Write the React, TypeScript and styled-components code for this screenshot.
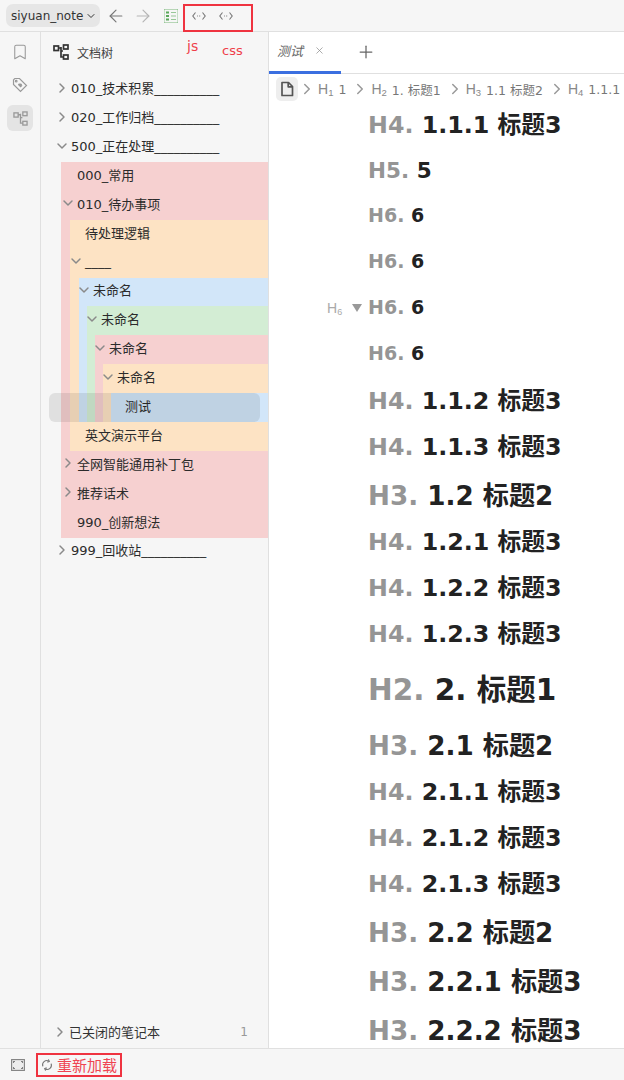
import React from 'react';
import styled, { createGlobalStyle } from 'styled-components';
import { ArrowLeft, ArrowRight, Bookmark, ChevronDown, ChevronRight, Plus, X } from 'lucide-react';

const UI_FONT = '"DejaVu Sans", "Noto Sans CJK SC", sans-serif';

const GlobalStyle = createGlobalStyle`
  html, body { margin: 0; padding: 0; background: #fff; }
  body { font-family: ${UI_FONT}; color: #222; }
  * { box-sizing: border-box; }
`;

const Page = styled.div`
  width: 624px;
  height: 1080px;
  display: flex;
  flex-direction: column;
  overflow: hidden;
  position: relative;
`;

const TopBar = styled.div`
  height: 32px;
  flex: none;
  display: flex;
  align-items: center;
  padding-left: 6px;
  background: #f6f6f6;
  border-bottom: 1px solid #e0e0e0;
`;

const NotebookSelect = styled.div`
  width: 94px;
  height: 23px;
  display: flex;
  align-items: center;
  justify-content: space-between;
  padding: 0 3px 0 5px;
  background: #e6e6e6;
  border-radius: 7px;
  font-size: 12px;
  color: #333;
`;

const NavButton = styled.div<{ $dim?: boolean }>`
  width: 24px;
  height: 24px;
  margin-left: 3.5px;
  display: flex;
  align-items: center;
  justify-content: center;
  color: ${({ $dim }) => ($dim ? '#b5b5b5' : '#777')};
`;

const RedBox = styled.div`
  width: 70px;
  height: 28px;
  margin: 4px 0 0 0.5px;
  display: flex;
  align-items: center;
  padding: 0 0 4px 7px;
  gap: 13px;
  border: 2px solid #ef3340;
  align-self: flex-start;
`;

const Note = styled.span<{ $left: number; $top: number; $size: number }>`
  position: absolute;
  left: ${({ $left }) => $left}px;
  top: ${({ $top }) => $top}px;
  color: #ef3f4a;
  font-size: ${({ $size }) => $size}px;
  line-height: 16px;
`;

const Middle = styled.div`
  flex: 1;
  min-height: 0;
  display: flex;
`;

const Rail = styled.div`
  width: 41px;
  flex: none;
  padding-top: 7px;
  display: flex;
  flex-direction: column;
  align-items: center;
  gap: 7px;
  background: #f6f6f6;
  border-right: 1px solid #e0e0e0;
`;

const RailButton = styled.div<{ $active?: boolean }>`
  width: 26px;
  height: 26px;
  display: flex;
  align-items: center;
  justify-content: center;
  border-radius: 6px;
  color: #999;
  background: ${({ $active }) => ($active ? '#e4e4e4' : 'transparent')};
`;

const TreePanel = styled.div`
  width: 228px;
  flex: none;
  display: flex;
  flex-direction: column;
  background: #f6f6f6;
  border-right: 1px solid #e0e0e0;
`;

const TreeHeader = styled.div`
  height: 43.3px;
  flex: none;
  display: flex;
  align-items: center;
  gap: 8px;
  padding: 0 0 3px 12px;
  font-size: 12px;
  color: #444;
`;

const HeaderIcon = styled.span`
  display: flex;
  color: #333;
`;

const TreeBody = styled.div`
  flex: 1;
  min-height: 0;
`;

const Group = styled.div<{ $tint: string; $inset: number }>`
  margin-left: ${({ $inset }) => $inset}px;
  background: ${({ $tint }) => $tint};
`;

const Row = styled.div<{ $pad: number; $focus?: boolean }>`
  position: relative;
  height: 28.9px;
  display: flex;
  align-items: center;
  padding-left: ${({ $pad }) => $pad}px;
  padding-bottom: 4px;
  font-size: 13px;
  color: #2b2b2b;
  white-space: nowrap;

  ${({ $focus }) =>
    $focus &&
    `
    &::after {
      content: '';
      position: absolute;
      left: -62px;
      right: 8px;
      top: 0;
      bottom: 0;
      border-radius: 6px;
      background: rgba(0, 0, 0, 0.085);
    }
  `}
`;

const Toggle = styled.span`
  width: 12px;
  flex: none;
  display: flex;
  align-items: center;
  color: #8a8a8a;

  svg {
    flex: none;
    margin-left: -5px;
  }
`;

const ClosedNotebooks = styled.div`
  height: 29px;
  margin-bottom: 2px;
  flex: none;
  display: flex;
  align-items: center;
  padding: 0 20px 0 16px;
  font-size: 13px;
  color: #333;
`;

const ClosedLabel = styled.span`
  flex: 1;
`;

const ClosedCount = styled.span`
  font-size: 12px;
  color: #999;
`;

const Editor = styled.div`
  flex: 1;
  min-width: 0;
  display: flex;
  flex-direction: column;
  background: #fff;
`;

const TabBar = styled.div`
  height: 42px;
  flex: none;
  display: flex;
  border-bottom: 1px solid #e0e0e0;
`;

const Tab = styled.div`
  width: 72px;
  height: 42px;
  display: flex;
  align-items: center;
  gap: 11px;
  padding: 0 0 3px 8px;
  font-size: 13px;
  font-style: italic;
  color: #666;
  border-bottom: 3px solid #3b6fe0;
`;

const TabClose = styled.span`
  display: flex;
  color: #888;
`;

const AddTab = styled.div`
  width: 50px;
  display: flex;
  align-items: center;
  justify-content: center;
  color: #666;
  padding-bottom: 2px;
`;

const Breadcrumb = styled.div`
  height: 28px;
  flex: none;
  display: flex;
  align-items: center;
  padding: 2px 0 0 7px;
  font-size: 12.5px;
  color: #777;
  white-space: nowrap;
  overflow: hidden;
`;

const DocButton = styled.div`
  width: 22px;
  height: 24px;
  flex: none;
  display: flex;
  align-items: center;
  justify-content: center;
  border-radius: 5px;
  background: #eeeeee;
  color: #555;
`;

const Crumb = styled.span`
  display: flex;
  align-items: center;
  flex: none;
  margin-left: 5px;
  gap: 5px;
`;

const CrumbLevel = styled.span`
  font-family: "Liberation Sans", sans-serif;
  font-size: 14px;
  color: #888;

  sub {
    font-size: 9.5px;
    vertical-align: -2px;
    line-height: 0;
  }
`;

const CrumbArrow = styled.span`
  width: 12px;
  flex: none;
  display: flex;
  justify-content: center;
  margin-left: 8px;
  color: #999;

  svg {
    flex: none;
  }

  ${DocButton} + & {
    margin-left: 3px;
  }
`;

const Content = styled.div`
  flex: 1;
  min-height: 0;
  overflow: hidden;
  padding-left: 99px;
`;

const LEVELS: Record<number, { size: number; top: number; bottom: number }> = {
  2: { size: 29.5, top: 18, bottom: 15 },
  3: { size: 26.2, top: 11, bottom: 8 },
  4: { size: 23.75, top: 8, bottom: 8 },
  5: { size: 21.5, top: 8, bottom: 8 },
  6: { size: 19, top: 6, bottom: 10 },
};

const Heading = styled.div<{ $level: number }>`
  position: relative;
  line-height: 30px;
  font-weight: 700;
  white-space: nowrap;
  color: #222;
  font-size: ${({ $level }) => LEVELS[$level].size}px;
  padding: ${({ $level }) => LEVELS[$level].top}px 0 ${({ $level }) => LEVELS[$level].bottom}px;
`;

const Prefix = styled.span`
  color: #959595;
`;

const Gutter = styled.span`
  position: absolute;
  left: -41px;
  top: 7px;
  width: 35px;
  display: flex;
  align-items: center;
  justify-content: space-between;
  font-weight: 400;
  font-family: "Liberation Sans", sans-serif;
  font-size: 14px;
  color: #aaa;

  sub {
    font-size: 9px;
    vertical-align: -2px;
    line-height: 0;
  }
`;

const GutterCaret = styled.i`
  width: 0;
  height: 0;
  border-left: 5px solid transparent;
  border-right: 5px solid transparent;
  border-top: 8px solid #999;
`;

const BottomBar = styled.div`
  height: 32px;
  flex: none;
  display: flex;
  align-items: center;
  padding-left: 11px;
  background: #f6f6f6;
  border-top: 1px solid #e0e0e0;
`;

const ReloadBox = styled.div`
  height: 24px;
  margin-left: 11px;
  display: flex;
  align-items: center;
  gap: 4px;
  padding: 0 3px 0 3px;
  border: 2px solid #ef3340;
  font-size: 15px;
  color: #ef4452;
`;

const TreeIcon = ({ size = 16, weight = 1.4 }: { size?: number; weight?: number }) => (
  <svg width={size} height={size} viewBox="0 0 16 16" fill="none" stroke="currentColor" strokeWidth={weight}>
    <rect x="1" y="2" width="4.5" height="4.5" />
    <rect x="10.5" y="1" width="4.5" height="4" />
    <rect x="10.5" y="11" width="4.5" height="4" />
    <path d="M5.5 4H8M8 3V13H10.5M8 7H10" />
  </svg>
);

const TagHeartIcon = () => (
  <svg width="16" height="16" viewBox="0 0 16 16" fill="none" stroke="currentColor" strokeWidth="1.2">
    <path d="M1.5 2.8 2.8 1.5H7.5L14.5 8.5 8.5 14.5 1.5 7.5Z" />
    <path d="M8.6 10.6 6.3 8.3C5.4 7.2 7 5.8 8 6.8 9.2 6 10.7 7.5 9.7 8.6L10.7 8.5Z" fill="currentColor" stroke="none" />
    <circle cx="4.2" cy="4.2" r="0.8" />
  </svg>
);

const OutlineIcon = () => (
  <svg width="14" height="14" viewBox="0 0 14 14" fill="#5aa85a">
    <path d="M0 0H14V1H0ZM0 13H14V14H0Z" opacity="0.4" />
    <path d="M0 0H1V14H0ZM13 0H14V14H13Z" opacity="0.3" />
    <rect x="2" y="2.5" width="3" height="2" />
    <rect x="7" y="3" width="5" height="1" opacity="0.6" />
    <rect x="2" y="6" width="3" height="2" />
    <rect x="7" y="6.5" width="5" height="1" opacity="0.6" />
    <rect x="2" y="9.5" width="3" height="2" />
    <rect x="7" y="10" width="5" height="1" opacity="0.6" />
  </svg>
);

const CodeIcon = () => (
  <svg width="14" height="10" viewBox="0 0 14 10" fill="none" stroke="#777" strokeWidth="1.1">
    <path d="M3.5 1.5 0.8 5 3.5 8.5M10.5 1.5 13.2 5 10.5 8.5" />
    <path d="M5.2 5H6M7.2 5H8M8.8 5H9" strokeWidth="1.2" />
  </svg>
);

const FullscreenIcon = () => (
  <svg width="14" height="12" viewBox="0 0 14 12" fill="#ececec" stroke="#808080" strokeWidth="1.1">
    <rect x="0.6" y="0.6" width="12.8" height="10.8" />
    <path d="M2.5 4V2.5H4M10 2.5H11.5V4M2.5 8V9.5H4M10 9.5H11.5V8" fill="none" />
  </svg>
);

const ReloadIcon = () => (
  <svg width="12" height="12" viewBox="0 0 13 13" fill="none" stroke="#777" strokeWidth="1.2">
    <path d="M2 8A4.7 4.7 0 0 1 8.5 2.2M11 5A4.7 4.7 0 0 1 4.5 10.8" />
    <path d="M8 0.4 9 2.6 6.8 3.4M5 12.6 4 10.4 6.2 9.6" />
  </svg>
);

const FileIcon = () => (
  <svg width="14" height="16" viewBox="0 0 14 16" fill="none" stroke="currentColor" strokeWidth="1.7" strokeLinejoin="round">
    <path d="M2 1.5H8.5L12.5 5.5V14.5H2Z" />
    <path d="M8.2 1.5V5.8H12.5" />
  </svg>
);

type Node = {
  label: string;
  open?: boolean;
  closed?: boolean;
  focus?: boolean;
  children?: Node[];
};

const RULE = '__________';

const TREE: Node[] = [
  { label: `010_技术积累${RULE}`, closed: true },
  { label: `020_工作归档${RULE}`, closed: true },
  {
    label: `500_正在处理${RULE}`,
    open: true,
    children: [
      { label: '000_常用' },
      {
        label: '010_待办事项',
        open: true,
        children: [
          { label: '待处理逻辑' },
          {
            label: '____',
            open: true,
            children: [
              {
                label: '未命名',
                open: true,
                children: [
                  {
                    label: '未命名',
                    open: true,
                    children: [
                      {
                        label: '未命名',
                        open: true,
                        children: [
                          {
                            label: '未命名',
                            open: true,
                            children: [{ label: '测试', focus: true }],
                          },
                        ],
                      },
                    ],
                  },
                ],
              },
            ],
          },
          { label: '英文演示平台' },
        ],
      },
      { label: '全网智能通用补丁包', closed: true },
      { label: '推荐话术', closed: true },
      { label: '990_创新想法' },
    ],
  },
  { label: `999_回收站${RULE}`, closed: true },
];

const TINTS = ['#f6d0d0', '#fde3c4', '#d2e6f9', '#d3edd4', '#f6d0d0', '#fde3c4', '#d2e6f9'];
const INSETS = [20, 9, 9, 8, 8, 8, 8];
const PADS = [18, 4, 3, 2, 2, 2, 2, 2];

const TreeNodes = ({ nodes, depth }: { nodes: Node[]; depth: number }) => (
  <>
    {nodes.map((node, i) => (
      <React.Fragment key={i}>
        <Row $pad={PADS[depth]} $focus={node.focus}>
          <Toggle>
            {node.closed && <ChevronRight size={16} strokeWidth={2.2} />}
            {node.open && <ChevronDown size={16} strokeWidth={2.2} />}
          </Toggle>
          {node.label}
        </Row>
        {node.children && (
          <Group $tint={TINTS[depth]} $inset={INSETS[depth]}>
            <TreeNodes nodes={node.children} depth={depth + 1} />
          </Group>
        )}
      </React.Fragment>
    ))}
  </>
);

const CRUMBS = [
  { level: 1, text: '1' },
  { level: 2, text: '1. 标题1' },
  { level: 3, text: '1.1 标题2' },
  { level: 4, text: '1.1.1' },
];

const HEADINGS: { level: number; text: string; gutter?: boolean }[] = [
  { level: 4, text: '1.1.1 标题3' },
  { level: 5, text: '5' },
  { level: 6, text: '6' },
  { level: 6, text: '6' },
  { level: 6, text: '6', gutter: true },
  { level: 6, text: '6' },
  { level: 4, text: '1.1.2 标题3' },
  { level: 4, text: '1.1.3 标题3' },
  { level: 3, text: '1.2 标题2' },
  { level: 4, text: '1.2.1 标题3' },
  { level: 4, text: '1.2.2 标题3' },
  { level: 4, text: '1.2.3 标题3' },
  { level: 2, text: '2. 标题1' },
  { level: 3, text: '2.1 标题2' },
  { level: 4, text: '2.1.1 标题3' },
  { level: 4, text: '2.1.2 标题3' },
  { level: 4, text: '2.1.3 标题3' },
  { level: 3, text: '2.2 标题2' },
  { level: 3, text: '2.2.1 标题3' },
  { level: 3, text: '2.2.2 标题3' },
];

const App = () => (
  <Page>
    <GlobalStyle />
    <TopBar>
      <NotebookSelect>
        siyuan_note
        <ChevronDown size={12} />
      </NotebookSelect>
      <NavButton>
        <ArrowLeft size={20} strokeWidth={1.4} />
      </NavButton>
      <NavButton $dim>
        <ArrowRight size={20} strokeWidth={1.4} />
      </NavButton>
      <NavButton>
        <OutlineIcon />
      </NavButton>
      <RedBox>
        <CodeIcon />
        <CodeIcon />
      </RedBox>
    </TopBar>
    <Note $left={187} $top={38} $size={14}>js</Note>
    <Note $left={222} $top={43} $size={13}>css</Note>
    <Middle>
      <Rail>
        <RailButton>
          <Bookmark size={18} strokeWidth={1.4} />
        </RailButton>
        <RailButton>
          <TagHeartIcon />
        </RailButton>
        <RailButton $active>
          <TreeIcon size={15} />
        </RailButton>
      </Rail>
      <TreePanel>
        <TreeHeader>
          <HeaderIcon>
            <TreeIcon weight={1.7} />
          </HeaderIcon>
          文档树
        </TreeHeader>
        <TreeBody>
          <TreeNodes nodes={TREE} depth={0} />
        </TreeBody>
        <ClosedNotebooks>
          <Toggle>
            <ChevronRight size={16} strokeWidth={2.2} />
          </Toggle>
          <ClosedLabel>已关闭的笔记本</ClosedLabel>
          <ClosedCount>1</ClosedCount>
        </ClosedNotebooks>
      </TreePanel>
      <Editor>
        <TabBar>
          <Tab>
            测试
            <TabClose>
              <X size={11} strokeWidth={1.5} />
            </TabClose>
          </Tab>
          <AddTab>
            <Plus size={20} strokeWidth={1.5} />
          </AddTab>
        </TabBar>
        <Breadcrumb>
          <DocButton>
            <FileIcon />
          </DocButton>
          {CRUMBS.map((crumb) => (
            <React.Fragment key={crumb.level}>
              <CrumbArrow>
                <ChevronRight size={18} strokeWidth={2} />
              </CrumbArrow>
              <Crumb>
                <CrumbLevel>
                  H<sub>{crumb.level}</sub>
                </CrumbLevel>
                {crumb.text}
              </Crumb>
            </React.Fragment>
          ))}
        </Breadcrumb>
        <Content>
          {HEADINGS.map((heading, i) => (
            <Heading key={i} $level={heading.level}>
              {heading.gutter && (
                <Gutter>
                  <span>
                    H<sub>6</sub>
                  </span>
                  <GutterCaret />
                </Gutter>
              )}
              <Prefix>H{heading.level}. </Prefix>
              {heading.text}
            </Heading>
          ))}
        </Content>
      </Editor>
    </Middle>
    <BottomBar>
      <FullscreenIcon />
      <ReloadBox>
        <ReloadIcon />
        重新加载
      </ReloadBox>
    </BottomBar>
  </Page>
);

export default App;
